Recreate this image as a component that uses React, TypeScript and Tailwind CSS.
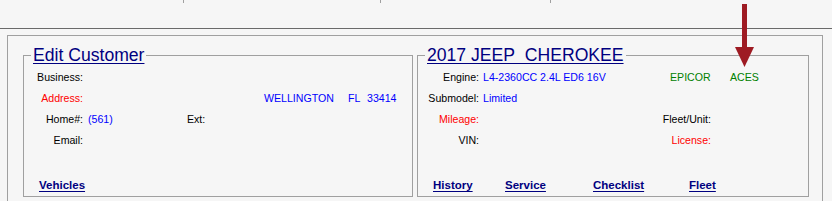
import React from 'react';

const label = 'text-right text-black';

function Row({ children }: { children: React.ReactNode }) {
  return <div className="flex h-[21px] items-center whitespace-nowrap">{children}</div>;
}

function Legend({ children }: { children: React.ReactNode }) {
  return (
    <legend className="ml-[7px] px-[2px] text-[17.6px] leading-[20px] text-[#000080] underline underline-offset-[2px] decoration-1">
      {children}
    </legend>
  );
}

function NavLink({ children, w }: { children: React.ReactNode; w?: string }) {
  return (
    <span className={`${w ?? ''} text-[11.5px] font-bold text-[#000080] underline underline-offset-[2px]`}>
      {children}
    </span>
  );
}

export default function App() {
  return (
    <div className="relative h-[201px] w-[832px] overflow-hidden bg-[#f6f6f6] font-['Liberation_Sans',Arial,sans-serif] text-[10.6px]">
      {/* toolbar strip */}
      <div className="flex h-[29px] border-b border-[#6a6a6a]">
        <div className="w-[183px]" />
        <div className="h-[3px] w-[197px] border-l border-[#a0a0a0]" />
        <div className="h-[3px] w-[170px] border-l border-[#a0a0a0]" />
        <div className="h-[3px] border-l border-[#a0a0a0]" />
      </div>

      <div className="pl-[7px] pt-[6px]">
        <div className="w-[816px] h-[180px] border-l border-t border-r border-[#a0a0a0] pl-[15px] pt-[9px]">
          <div className="flex gap-[4px]">
            {/* Edit Customer */}
            <fieldset className="m-0 h-[152px] w-[390px] border border-[#a0a0a0] p-0">
              <Legend>Edit Customer</Legend>
              <div className="pt-[2px]">
                <Row>
                  <span className={`w-[59px] ${label}`}>Business:</span>
                </Row>
                <Row>
                  <span className="w-[59px] text-right text-[#ff0000]">Address:</span>
                  <span className="ml-[181px] w-[84px] text-[#0000ff]">WELLINGTON</span>
                  <span className="w-[19px] text-[#0000ff]">FL</span>
                  <span className="text-[#0000ff]">33414</span>
                </Row>
                <Row>
                  <span className={`w-[59px] ${label}`}>Home#:</span>
                  <span className="ml-[5px] w-[99px] text-[#0000ff]">(561)</span>
                  <span className="text-black">Ext:</span>
                </Row>
                <Row>
                  <span className={`w-[59px] ${label}`}>Email:</span>
                </Row>
                <div className="mt-[25px] flex h-[20px] items-center pl-[15px]">
                  <NavLink>Vehicles</NavLink>
                </div>
              </div>
            </fieldset>

            {/* Vehicle */}
            <fieldset className="m-0 h-[152px] w-[392px] border border-[#a0a0a0] p-0">
              <Legend>2017 JEEP&nbsp; CHEROKEE</Legend>
              <div className="pt-[2px]">
                <Row>
                  <span className={`w-[61px] ${label}`}>Engine:</span>
                  <span className="ml-[4px] w-[187px] text-[#0000ff]">L4-2360CC 2.4L ED6 16V</span>
                  <span className="w-[60px] text-[#008000]">EPICOR</span>
                  <span className="text-[#008000]">ACES</span>
                </Row>
                <Row>
                  <span className={`w-[61px] ${label}`}>Submodel:</span>
                  <span className="ml-[4px] text-[#0000ff]">Limited</span>
                </Row>
                <Row>
                  <span className="w-[61px] text-right text-[#ff0000]">Mileage:</span>
                  <span className="w-[232px] text-right text-black">Fleet/Unit:</span>
                </Row>
                <Row>
                  <span className={`w-[61px] ${label}`}>VIN:</span>
                  <span className="w-[232px] text-right text-[#ff0000]">License:</span>
                </Row>
                <div className="mt-[25px] flex h-[20px] items-center pl-[15px]">
                  <NavLink w="w-[72px]">History</NavLink>
                  <NavLink w="w-[88px]">Service</NavLink>
                  <NavLink w="w-[96px]">Checklist</NavLink>
                  <NavLink>Fleet</NavLink>
                </div>
              </div>
            </fieldset>
          </div>
        </div>
      </div>

      {/* annotation arrow */}
      <svg className="absolute left-[734px] top-[3px]" width="22" height="66" viewBox="0 0 22 66">
        <rect x="8" y="1" width="5" height="45" fill="#9e1b23" />
        <polygon points="1,44 20,44 10.5,64" fill="#9e1b23" />
      </svg>
    </div>
  );
}
